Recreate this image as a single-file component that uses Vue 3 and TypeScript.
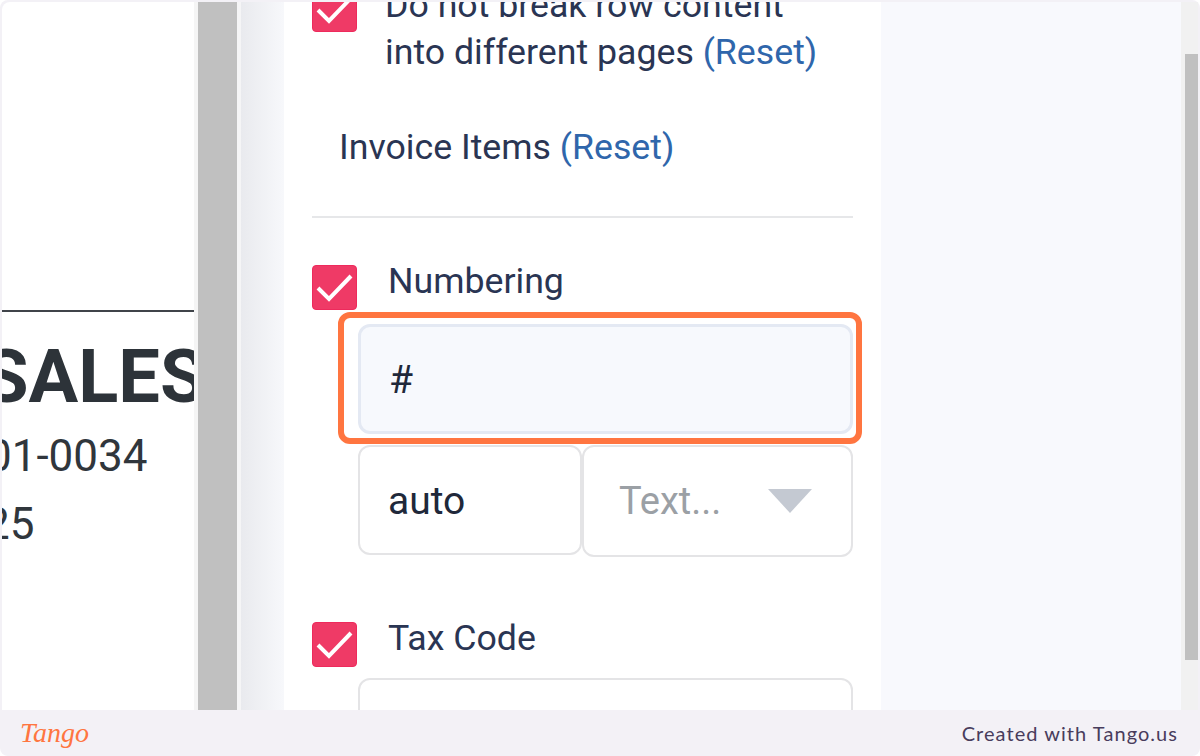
<script setup lang="ts">
const fullWidth = 1200
</script>

<template>
  <div class="frame" :style="{ width: fullWidth + 'px' }">
    <div class="shot">
      <section class="doc">
        <div class="doc-rule"></div>
        <div class="doc-title">SALES</div>
        <div class="doc-line doc-num">01-0034</div>
        <div class="doc-line doc-date">25</div>
      </section>
      <div class="doc-gap"></div>
      <div class="doc-scroll"></div>
      <div class="doc-gap2"></div>
      <div class="shade"></div>
      <section class="panel">
        <div class="row row-top">
          <span class="check">
            <svg viewBox="0 0 45 45" width="45" height="45"><path d="M6 23 L17 34 L39 11" fill="none" stroke="#fff" stroke-width="4" /></svg>
          </span>
          <p class="label wrap">Do not break row content<br />into different pages <a>(Reset)</a></p>
        </div>
        <p class="label section">Invoice Items <a>(Reset)</a></p>
        <div class="divider"></div>
        <div class="row row-num">
          <span class="check">
            <svg viewBox="0 0 45 45" width="45" height="45"><path d="M6 23 L17 34 L39 11" fill="none" stroke="#fff" stroke-width="4" /></svg>
          </span>
          <p class="label">Numbering</p>
        </div>
        <div class="field-focus">
          <div class="highlight"></div>
          <div class="field active">#</div>
        </div>
        <div class="pair">
          <div class="field auto">auto</div>
          <div class="field select">
            <span>Text...</span>
            <i class="caret"></i>
          </div>
        </div>
        <div class="row row-tax">
          <span class="check">
            <svg viewBox="0 0 45 45" width="45" height="45"><path d="M6 23 L17 34 L39 11" fill="none" stroke="#fff" stroke-width="4" /></svg>
          </span>
          <p class="label">Tax Code</p>
        </div>
        <div class="field stub"></div>
      </section>
      <div class="side"></div>
      <div class="track"><div class="thumb"></div></div>
    </div>
    <footer class="foot">
      <span class="logo">Tango</span>
      <span class="credit">Created with Tango.us</span>
    </footer>
  </div>
</template>

<style>
html, body { margin: 0; background: #fff; }
</style>

<style scoped>
.frame {
  height: 756px;
  box-sizing: border-box;
  padding-top: 2px;
  background: #f3f1f6;
  border-radius: 8px;
  overflow: hidden;
  display: flex;
  flex-direction: column;
  font-family: Roboto, "Liberation Sans", sans-serif;
}
.shot {
  flex: 1;
  min-height: 0;
  display: flex;
  padding-left: 2px;
  overflow: hidden;
}
.doc {
  width: 192px;
  flex: none;
  background: #fff;
  border-top-left-radius: 8px;
  overflow: hidden;
  padding-top: 308px;
  box-sizing: border-box;
}
.doc-rule { height: 1.5px; background: #40444a; }
.doc-title {
  margin: 25px 0 0 -19px;
  font-size: 74px;
  line-height: 80px;
  font-weight: 700;
  color: #2d3339;
  white-space: nowrap;
}
.doc-line { font-size: 44px; line-height: 48px; color: #30363c; white-space: nowrap; }
.doc-num { margin: 15px 0 0 -15px; }
.doc-date { margin: 20px 0 0 -17px; }
.doc-gap { width: 4px; flex: none; background: #f5f5f5; }
.doc-scroll { width: 39px; flex: none; background: #c0c0c0; }
.doc-gap2 { width: 4px; flex: none; background: #f5f5f6; }
.shade { width: 43px; flex: none; background: linear-gradient(90deg, #e9eaee, #f7f8fb); }
.panel {
  width: 597px;
  flex: none;
  box-sizing: border-box;
  background: #fff;
  padding-left: 28px;
  overflow: hidden;
}
.row { display: flex; align-items: flex-start; }
.check {
  width: 45px;
  height: 45px;
  flex: none;
  box-sizing: border-box;
  background: #ef3a66;
  border: 1px solid #ee2a5c;
  border-radius: 4px;
  display: block;
}
.check svg { display: block; margin: -1px; }
.label { margin: 0; font-size: 35.7px; color: #2a3553; white-space: nowrap; }
.label a { color: #2f66ab; }
.row-top { margin-top: -15px; }
.wrap { margin-left: 28px; line-height: 47px; margin-top: -5px; }
.section { margin: 48px 0 0 27px; line-height: 47px; }
.divider { width: 541px; height: 2px; margin-top: 45px; background: #e6e7e9; }
.row-num { margin-top: 47px; }
.row-num .label, .row-tax .label { margin-left: 31px; line-height: 38px; margin-top: -3px; }
.field-focus { position: relative; width: 495px; margin: 14px 0 0 46px; }
.highlight {
  position: absolute;
  inset: -12px -9px -10px -20px;
  border: 6px solid #ff7540;
  border-radius: 12px;
  pointer-events: none;
}
.field {
  box-sizing: border-box;
  border: 2px solid #e4e4e6;
  border-radius: 12px;
  background: #fff;
  font-size: 39px;
  color: #20283a;
}
.active {
  height: 110px;
  background: #f7f9fd;
  border: 3px solid #e4e9f3;
  padding-left: 28px;
  line-height: 106px;
}
.pair { display: flex; margin: 11px 0 0 46px; }
.auto { width: 224px; height: 110px; padding-left: 28px; line-height: 108px; }
.select {
  width: 271px;
  height: 112px;
  padding-left: 35px;
  display: flex;
  align-items: center;
  font-size: 38px;
  color: #9ba0a5;
}
.caret {
  width: 0;
  height: 0;
  margin-left: 47px;
  border: 22px solid transparent;
  border-top: 24px solid #c4c9d2;
  border-bottom: 0;
}
.row-tax { margin-top: 65px; }
.stub { width: 495px; height: 120px; margin: 11px 0 0 46px; }
.side { flex: 1; background: #f8f9fd; }
.track { width: 17px; flex: none; margin-right: 2px; background: #f1f1f1; padding-top: 52px; box-sizing: border-box; }
.thumb { height: 606px; margin-left: 4px; background: #c0c0c0; }
.foot {
  height: 46px;
  flex: none;
  display: flex;
  align-items: center;
  justify-content: space-between;
  padding: 0 22px 0 20px;
}
.logo {
  font-family: "Liberation Serif", serif;
  font-style: italic;
  font-size: 28px;
  color: #ff7540;
}
.credit {
  font-family: Lato, "Liberation Sans", sans-serif;
  font-size: 20px;
  letter-spacing: 1.05px;
  color: #483c5c;
}
</style>
